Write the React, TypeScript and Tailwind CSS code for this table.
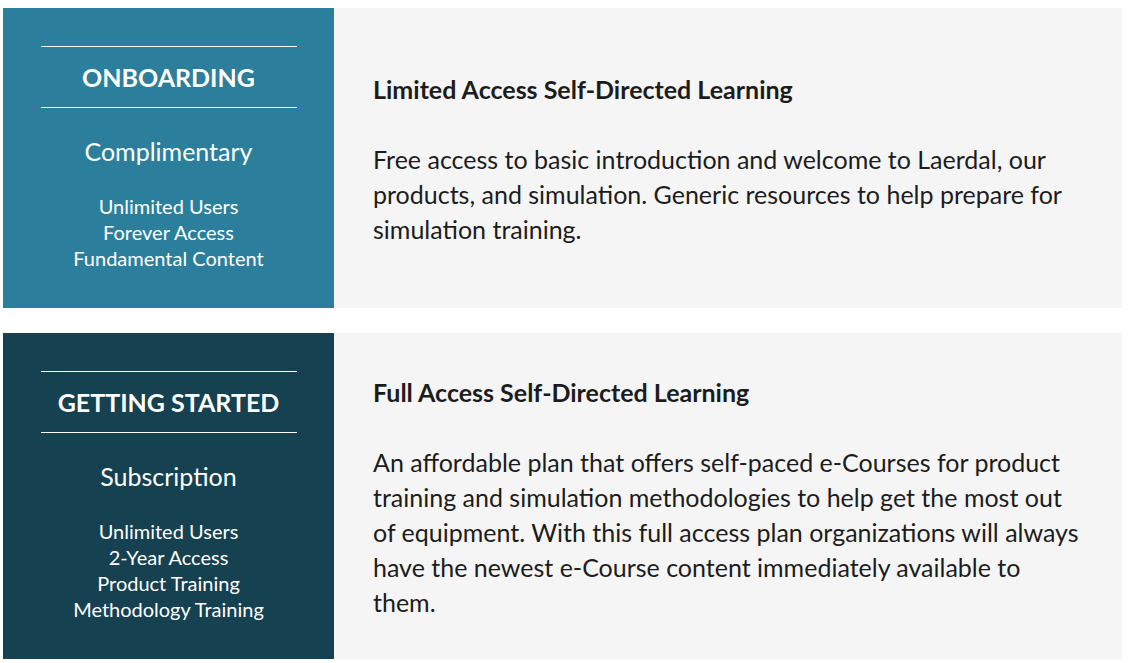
import React from 'react'

const plans = [
  {
    label: 'ONBOARDING',
    tier: 'Complimentary',
    features: ['Unlimited Users', 'Forever Access', 'Fundamental Content'],
    title: 'Limited Access Self-Directed Learning',
    body: 'Free access to basic introduction and welcome to Laerdal, our products, and simulation. Generic resources to help prepare for simulation training.',
    bg: 'bg-[#2b7f9c]',
  },
  {
    label: 'GETTING STARTED',
    tier: 'Subscription',
    features: ['Unlimited Users', '2-Year Access', 'Product Training', 'Methodology Training'],
    title: 'Full Access Self-Directed Learning',
    body: 'An affordable plan that offers self-paced e-Courses for product training and simulation methodologies to help get the most out of equipment. With this full access plan organizations will always have the newest e-Course content immediately available to them.',
    bg: 'bg-[#154150]',
  },
]

export default function App() {
  return (
    <main className="min-h-screen bg-white pt-[8px] pl-[3px] font-['Lato','Liberation_Sans',sans-serif]">
      <div className="w-[1119px] flex flex-col gap-[25px]">
        {plans.map((p) => (
          <section key={p.label} className="flex">
            {/* left tier panel */}
            <div className={`w-[331px] shrink-0 ${p.bg} text-white text-center pt-[38px] pb-[37px]`}>
              <div className="mx-auto w-[256px] h-px bg-white" />
              <h2 className="py-[15px] text-[25px] leading-[30px] font-bold">{p.label}</h2>
              <div className="mx-auto w-[256px] h-px bg-white" />
              <div className="mt-[28px] text-[25px] leading-[30px]">{p.tier}</div>
              <ul className="mt-[27px] text-[20px] leading-[26px]">
                {p.features.map((f) => (
                  <li key={f}>{f}</li>
                ))}
              </ul>
            </div>

            {/* description */}
            <div className="flex-1 bg-[#f5f5f5] px-[39px] pt-[4px] flex flex-col justify-center text-[#1c1c1c]">
              <h3 className="text-[25px] leading-[30px] font-bold">{p.title}</h3>
              <p className="mt-[38px] text-[25px] leading-[35px]">{p.body}</p>
            </div>
          </section>
        ))}
      </div>
    </main>
  )
}
